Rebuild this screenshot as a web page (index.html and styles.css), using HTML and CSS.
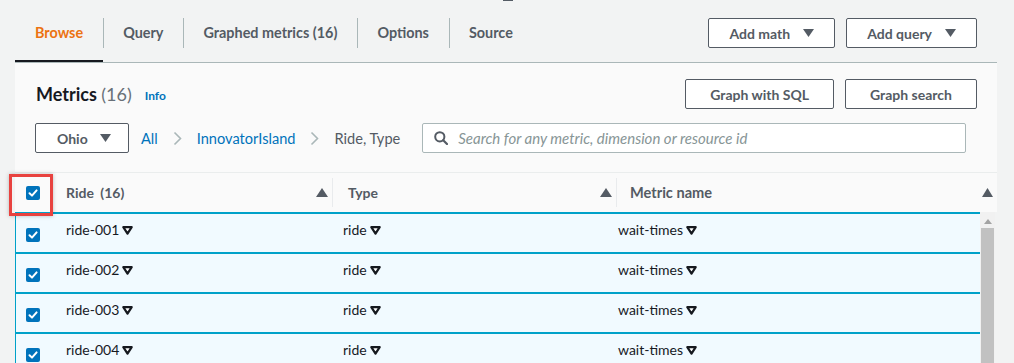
FILE: index.html
```html
<!DOCTYPE html>
<html lang="en">
<head>
    <meta charset="UTF-8">
    <title>Metrics - Browse</title>
    <link rel="stylesheet" href="styles.css">
</head>
<body>

    <div class="top-mark"></div>

    <div class="tabs-bar">
        <ul class="tabs">
            <li class="tab active">Browse</li>
            <li class="tab">Query</li>
            <li class="tab">Graphed metrics (16)</li>
            <li class="tab">Options</li>
            <li class="tab">Source</li>
        </ul>
        <div class="tab-actions">
            <button class="btn">Add math
                <svg class="caret" width="11" height="8" viewBox="0 0 11 8"><polygon points="0,0 11,0 5.5,8" fill="#545b64"/></svg>
            </button>
            <button class="btn">Add query
                <svg class="caret" width="11" height="8" viewBox="0 0 11 8"><polygon points="0,0 11,0 5.5,8" fill="#545b64"/></svg>
            </button>
        </div>
    </div>

    <div class="panel">
        <div class="panel-head">
            <div class="title-row">
                <h2 class="title">Metrics <span class="count">(16)</span></h2>
                <a class="info" href="#">Info</a>
                <div class="title-actions">
                    <button class="btn wide">Graph with SQL</button>
                    <button class="btn wide">Graph search</button>
                </div>
            </div>

            <div class="filter-row">
                <button class="btn select">Ohio
                    <svg class="caret" width="11" height="8" viewBox="0 0 11 8"><polygon points="0,0 11,0 5.5,8" fill="#545b64"/></svg>
                </button>
                <nav class="crumbs">
                    <a href="#">All</a>
                    <svg class="chev" width="9" height="15" viewBox="0 0 9 15"><polyline points="1.5,1.5 7.5,7.5 1.5,13.5" fill="none" stroke="#aab7b8" stroke-width="1.6"/></svg>
                    <a href="#">InnovatorIsland</a>
                    <svg class="chev" width="9" height="15" viewBox="0 0 9 15"><polyline points="1.5,1.5 7.5,7.5 1.5,13.5" fill="none" stroke="#aab7b8" stroke-width="1.6"/></svg>
                    <span class="current">Ride, Type</span>
                </nav>
                <div class="search">
                    <svg width="14" height="14" viewBox="0 0 14 14"><circle cx="5.8" cy="5.8" r="4.6" fill="none" stroke="#545b64" stroke-width="2"/><line x1="9.2" y1="9.2" x2="13" y2="13" stroke="#545b64" stroke-width="2.2" stroke-linecap="round"/></svg>
                    <input type="text" placeholder="Search for any metric, dimension or resource id">
                </div>
            </div>
        </div>

        <div class="table">
            <div class="thead">
                <div class="th check-cell"><span class="checkbox"></span></div>
                <div class="th">
                    <span>Ride <span class="num">(16)</span></span>
                    <svg width="12" height="9" viewBox="0 0 12 9"><polygon points="0,9 12,9 6,0" fill="#545b64"/></svg>
                </div>
                <div class="th">
                    <span>Type</span>
                    <svg width="12" height="9" viewBox="0 0 12 9"><polygon points="0,9 12,9 6,0" fill="#545b64"/></svg>
                </div>
                <div class="th last">
                    <span class="metric-head">Metric name</span>
                    <svg width="11" height="9" viewBox="0 0 11 9"><polygon points="0,9 11,9 5.5,0" fill="#545b64"/></svg>
                </div>
            </div>
            <div class="highlight"></div>

            <div class="tbody">
                <div class="rows" id="rows"></div>
                <div class="scrollbar">
                    <svg class="scroll-up" width="8" height="5" viewBox="0 0 8 5"><polygon points="0,5 8,5 4,0" fill="#a3a3a3"/></svg>
                    <div class="thumb"></div>
                </div>
            </div>
        </div>
    </div>

    <script>
        // build the selected metric rows
        var rows = document.getElementById('rows');
        var filter = '<svg class="filter" width="11" height="9" viewBox="0 0 11 9"><polygon points="1.3,1.2 9.7,1.2 5.5,7.6" fill="#fff" stroke="#16191f" stroke-width="2.2" stroke-linejoin="round"/></svg>';

        for (var i = 1; i <= 4; i++) {
            var id = 'ride-00' + i;
            rows.innerHTML +=
                '<div class="tr">' +
                    '<div class="td check-cell"><span class="checkbox"></span></div>' +
                    '<div class="td">' + id + filter + '</div>' +
                    '<div class="td">ride' + filter + '</div>' +
                    '<div class="td">wait-times' + filter + '</div>' +
                '</div>';
        }
    </script>

</body>
</html>
```

FILE: styles.css
```css
* {
    margin: 0;
    padding: 0;
    box-sizing: border-box;
}

body {
    font-family: Lato, "Noto Sans", sans-serif;
    font-size: 14px;
    background-color: #f2f3f3;
    color: #16191f;
    overflow: hidden;
}

.top-mark {
    position: absolute;
    left: 503px;
    top: 0;
    width: 10px;
    height: 1px;
    background-color: #545b64;
}

/* tabs */
.tabs-bar {
    display: flex;
    margin: 0 17px 0 15px;
    border-bottom: 1px solid #aab7b8;
}

.tabs {
    display: flex;
    list-style: none;
}

.tab {
    position: relative;
    height: 62px;
    display: flex;
    align-items: center;
    padding: 2px 20px 0 20px;
    font-size: 14.4px;
    font-weight: bold;
    color: #545b64;
}

.tab + .tab::before {
    content: "";
    position: absolute;
    left: 0;
    top: 18px;
    height: 30px;
    width: 1px;
    background-color: #aab7b8;
}

.tab.active {
    color: #ec7211;
    box-shadow: inset 0 -2px 0 #16191f;
}

.tab-actions {
    display: flex;
    gap: 11px;
    margin: 18px 20px 0 auto;
}

.btn {
    display: flex;
    align-items: center;
    gap: 13px;
    height: 30px;
    padding: 0 20px;
    background-color: #fff;
    border: 1px solid #545b64;
    border-radius: 2px;
    font-family: inherit;
    font-size: 14px;
    font-weight: bold;
    color: #545b64;
}

.btn.wide {
    padding: 0 24px;
}

/* panel */
.panel {
    margin: 0 17px 0 15px;
    background-color: #fafafa;
}

.panel-head {
    padding: 16px 20px 19px 20px;
}

.title-row {
    display: flex;
    align-items: center;
    height: 30px;
}

.title {
    margin-left: 1px;
    font-size: 18px;
    font-weight: bold;
    color: #16191f;
}

.title .count {
    font-weight: normal;
    color: #687078;
}

.info {
    margin-left: 13px;
    margin-top: 2px;
    font-size: 12px;
    font-weight: bold;
    color: #0073bb;
    text-decoration: none;
}

.title-actions {
    display: flex;
    gap: 11px;
    margin-left: auto;
}

.filter-row {
    display: flex;
    align-items: center;
    height: 30px;
    margin-top: 14px;
}

.select {
    width: 94px;
    padding: 0 0 0 21px;
    gap: 12px;
}

.crumbs {
    display: flex;
    align-items: center;
    gap: 15px;
    margin-left: 12px;
    font-size: 14.6px;
}

.crumbs a {
    color: #0073bb;
    text-decoration: none;
}

.crumbs .current {
    color: #545b64;
}

.search {
    flex: 1;
    display: flex;
    align-items: center;
    gap: 10px;
    height: 30px;
    margin: 0 11px 0 22px;
    padding: 0 11px;
    background-color: #fff;
    border: 1px solid #aab7b8;
    border-radius: 2px;
}

.search input {
    flex: 1;
    border: none;
    outline: none;
    font-family: inherit;
    font-size: 15px;
    font-style: italic;
    background: transparent;
}

.search input::placeholder {
    color: #879596;
}

/* table */
.table {
    position: relative;
}

.thead {
    display: grid;
    grid-template-columns: 41px 277px 284px 1fr;
    align-items: center;
    height: 40px;
    border-top: 1px solid #eaeded;
}

.th {
    display: flex;
    align-items: center;
    justify-content: space-between;
    height: 29px;
    padding: 0 4px 0 10px;
    border-right: 1px solid #e9ebed;
    font-weight: bold;
    color: #545b64;
}

.th:nth-child(3) {
    padding: 0 4px 0 15px;
}

.th.last {
    border-right: none;
    padding: 0 4px 0 13px;
}

.th .num {
    margin-left: 3px;
}

.metric-head {
    font-size: 14.6px;
}

.th.check-cell {
    border-right: none;
    padding: 0 0 0 11px;
}

.checkbox {
    display: inline-block;
    width: 14px;
    height: 14px;
    border-radius: 2px;
    background-color: #0073bb;
    background-image: url("data:image/svg+xml,%3Csvg xmlns='http://www.w3.org/2000/svg' width='14' height='14' viewBox='0 0 14 14'%3E%3Cpolyline points='3.5,7.2 6,9.6 10.6,4.4' fill='none' stroke='%23fff' stroke-width='2' stroke-linecap='round' stroke-linejoin='round'/%3E%3C/svg%3E");
}

.highlight {
    position: absolute;
    left: -6px;
    top: 2px;
    width: 44px;
    height: 42px;
    border: 3px solid #e8423f;
    box-shadow: 0 0 4px rgba(0, 0, 0, 0.25);
}

.tbody {
    display: flex;
    height: 151px;
    padding-right: 2px;
    background-color: #f2f3f3;
}

.rows {
    flex: 1;
    background-color: #f1faff;
    border-left: 1px solid #00a1c9;
}

.tr {
    display: grid;
    grid-template-columns: 40px 277px 275px 1fr;
    height: 40px;
    border-top: 2px solid #00a1c9;
}

.td {
    display: flex;
    align-items: flex-start;
    gap: 3px;
    padding: 6px 0 0 10px;
    line-height: 20px;
}

.td.check-cell {
    padding: 14px 0 0 10px;
}

.filter {
    margin-top: 6px;
}

.scrollbar {
    width: 15px;
    display: flex;
    flex-direction: column;
    align-items: center;
    background-color: #f1f1f1;
}

.scroll-up {
    margin-top: 7px;
}

.thumb {
    width: 13px;
    flex: 1;
    margin-top: 4px;
    background-color: #c1c1c1;
}
```
